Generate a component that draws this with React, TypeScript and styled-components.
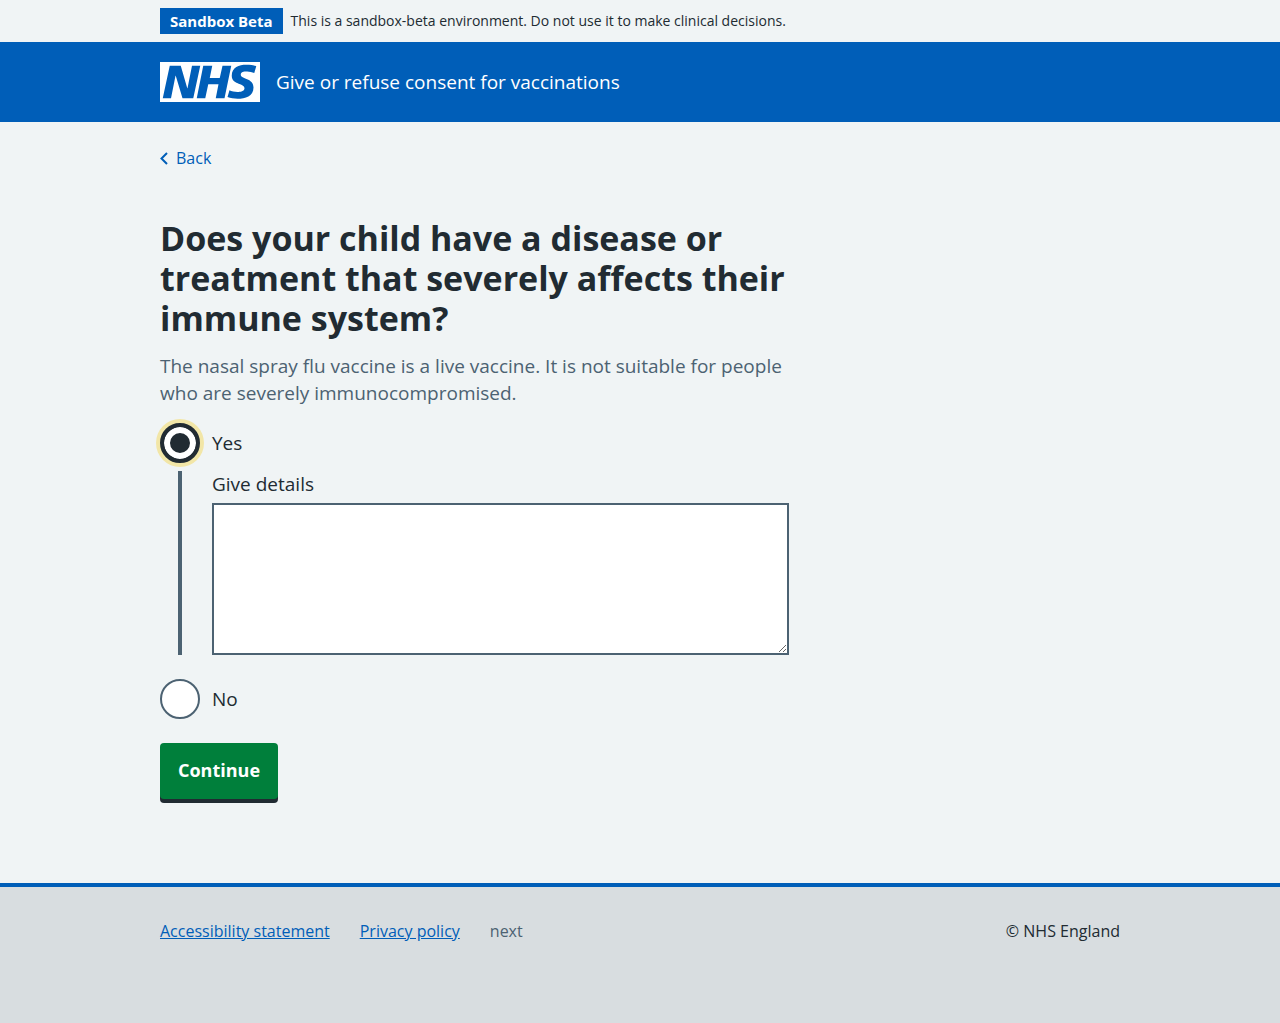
import React, { useState } from "react";
import styled, { createGlobalStyle } from "styled-components";

const colour = {
  blue: "#005eb8",
  text: "#212b32",
  secondary: "#4c6272",
  page: "#f0f4f5",
  footer: "#d8dde0",
  green: "#007f3b",
  focus: "#f2e6a7",
  white: "#ffffff",
};

const GlobalStyle = createGlobalStyle`
  *, *::before, *::after { box-sizing: border-box; }
  html { background: ${colour.footer}; }
  body {
    margin: 0;
    background: ${colour.page};
    color: ${colour.text};
    font-family: "Open Sans", "Noto Sans", Arial, sans-serif;
    font-size: 19px;
    font-weight: 500;
    line-height: 27px;
  }
`;

const Container = styled.div`
  max-width: 960px;
  margin: 0 auto;

  @media (max-width: 1024px) {
    margin: 0 32px;
  }
`;

const Environment = styled.aside`
  padding: 8px 0;
  font-size: 14px;
  line-height: 26px;
`;

const EnvironmentRow = styled(Container)`
  display: flex;
  align-items: center;
  gap: 8px;
`;

const Tag = styled.strong`
  flex: none;
  padding: 0 10px;
  background: ${colour.blue};
  color: ${colour.white};
  font-size: 15px;
  font-weight: 700;
`;

const Header = styled.header`
  padding: 20px 0;
  background: ${colour.blue};
`;

const HeaderRow = styled(Container)`
  display: flex;
`;

const HeaderLink = styled.a`
  display: flex;
  align-items: center;
  gap: 16px;
  color: ${colour.white};
  text-decoration: none;
`;

const Logo = styled.svg`
  display: block;
  flex: none;
  width: 100px;
  height: 40px;
`;

const BackLink = styled.a`
  display: inline-flex;
  align-items: center;
  gap: 8px;
  margin-top: 24px;
  color: ${colour.blue};
  font-size: 16px;
  line-height: 24px;
  text-decoration: none;
`;

const Chevron = styled.svg`
  width: 8px;
  height: 13px;
`;

const Main = styled.main`
  padding: 46px 0 80px;
`;

const Columns = styled.div`
  display: grid;
  grid-template-columns: 2fr 1fr;
  column-gap: 16px;

  @media (max-width: 768px) {
    grid-template-columns: 1fr;
  }
`;

const Fieldset = styled.fieldset`
  min-width: 0;
  margin: 0 0 24px;
  padding: 0;
  border: 0;
`;

const Legend = styled.legend`
  padding: 0;
`;

const Title = styled.h1`
  margin: 0 0 15px;
  font-size: 34px;
  font-weight: 700;
  line-height: 40px;
`;

const Hint = styled.p`
  margin: 0 0 16px;
  color: ${colour.secondary};
`;

const Radios = styled.div`
  display: flex;
  flex-direction: column;
`;

const Option = styled.div`
  display: flex;
  align-items: center;
  gap: 12px;
`;

const OptionLabel = styled.label`
  padding-top: 2px;
`;

const Radio = styled.input`
  appearance: none;
  flex: none;
  width: 40px;
  height: 40px;
  margin: 0;
  border: 2px solid ${colour.secondary};
  border-radius: 50%;
  background: ${colour.white};

  &:checked {
    border: 4px solid ${colour.text};
    background: ${colour.text};
    box-shadow: inset 0 0 0 6px ${colour.white}, 0 0 0 4px ${colour.focus};
    outline: none;
  }
`;

const Conditional = styled.div`
  display: flex;
  flex-direction: column;
  gap: 5px;
  margin: 8px 0 24px 18px;
  padding-left: 30px;
  border-left: 4px solid ${colour.secondary};
`;

const Details = styled.textarea`
  display: block;
  width: 100%;
  min-height: 152px;
  height: 152px;
  margin: 0;
  padding: 4px;
  border: 2px solid ${colour.secondary};
  border-radius: 0;
  background: ${colour.white};
  color: inherit;
  font: inherit;
  resize: vertical;
`;

const Button = styled.button`
  display: block;
  margin: 0 0 4px;
  padding: 14px 18px 15px;
  border: 0;
  border-radius: 4px;
  background: ${colour.green};
  box-shadow: 0 4px 0 ${colour.text};
  color: ${colour.white};
  font: inherit;
  font-size: 18px;
  font-weight: 700;
  cursor: pointer;
`;

const Footer = styled.footer`
  padding: 32px 0 80px;
  border-top: 4px solid ${colour.blue};
  background: ${colour.footer};
  font-size: 16px;
  line-height: 24px;
`;

const FooterRow = styled(Container)`
  display: flex;
  flex-wrap: wrap;
  justify-content: space-between;
  gap: 16px;
`;

const FooterList = styled.ul`
  display: flex;
  flex-wrap: wrap;
  gap: 30px;
  margin: 0;
  padding: 0;
  color: ${colour.secondary};
  list-style: none;
`;

const FooterLink = styled.a`
  color: ${colour.blue};
`;

const Copyright = styled.p`
  margin: 0;
`;

export default function App() {
  const [answer, setAnswer] = useState("yes");

  return (
    <>
      <GlobalStyle />
      <Environment>
        <EnvironmentRow>
          <Tag>Sandbox Beta</Tag>
          <span>
            This is a sandbox-beta environment. Do not use it to make clinical
            decisions.
          </span>
        </EnvironmentRow>
      </Environment>

      <Header>
        <HeaderRow>
          <HeaderLink href="#start">
            <Logo viewBox="0 0 200 80" role="img" aria-label="NHS">
              <path
                fill="currentColor"
                d="M200 0v80H0V0h200Zm-27.5 5.5c-14.5 0-29 5-29 22 0 10.2 7.7 13.5 14.7 16.3l.7.3c5.4 2 10.1 3.9 10.1 8.4 0 6.5-8.5 7.5-14 7.5s-12.5-1.5-16-3.5L135 70c5.5 2 13.5 3.5 20 3.5 15.5 0 32-4.5 32-22.5 0-19.5-25.5-16.5-25.5-25.5 0-5.5 5.5-6.5 12.5-6.5a35 35 0 0 1 14.5 3l4-13.5c-4.5-2-12-3-20-3Zm-131 2h-22l-14 65H22l9-45h.5l13.5 45h21.5l14-65H64l-9 45h-.5l-13-45Zm63 0h-18l-13 65h17l6-28H117l-5.5 28H129l13.5-65H125L119.5 32h-20l5-24.5Z"
              />
            </Logo>
            <span>Give or refuse consent for vaccinations</span>
          </HeaderLink>
        </HeaderRow>
      </Header>

      <Container>
        <BackLink href="#back">
          <Chevron viewBox="0 0 8 13" aria-hidden="true">
            <path
              d="M7 1 1.5 6.5 7 12"
              fill="none"
              stroke="currentColor"
              strokeWidth="2"
            />
          </Chevron>
          Back
        </BackLink>
        <Main>
          <Columns>
            <form onSubmit={(event) => event.preventDefault()}>
              <Fieldset aria-describedby="immune-hint">
                <Legend>
                  <Title>
                    Does your child have a disease or treatment that severely
                    affects their immune system?
                  </Title>
                </Legend>
                <Hint id="immune-hint">
                  The nasal spray flu vaccine is a live vaccine. It is not
                  suitable for people who are severely immunocompromised.
                </Hint>
                <Radios>
                  <Option>
                    <Radio
                      type="radio"
                      id="immune-yes"
                      name="immune"
                      value="yes"
                      checked={answer === "yes"}
                      onChange={() => setAnswer("yes")}
                    />
                    <OptionLabel htmlFor="immune-yes">Yes</OptionLabel>
                  </Option>
                  {answer === "yes" && (
                    <Conditional>
                      <label htmlFor="immune-details">Give details</label>
                      <Details id="immune-details" name="details" rows={5} />
                    </Conditional>
                  )}
                  <Option>
                    <Radio
                      type="radio"
                      id="immune-no"
                      name="immune"
                      value="no"
                      checked={answer === "no"}
                      onChange={() => setAnswer("no")}
                    />
                    <OptionLabel htmlFor="immune-no">No</OptionLabel>
                  </Option>
                </Radios>
              </Fieldset>
              <Button type="submit">Continue</Button>
            </form>
          </Columns>
        </Main>
      </Container>

      <Footer>
        <FooterRow>
          <FooterList>
            <li>
              <FooterLink href="#accessibility">
                Accessibility statement
              </FooterLink>
            </li>
            <li>
              <FooterLink href="#privacy">Privacy policy</FooterLink>
            </li>
            <li>next</li>
          </FooterList>
          <Copyright>© NHS England</Copyright>
        </FooterRow>
      </Footer>
    </>
  );
}
